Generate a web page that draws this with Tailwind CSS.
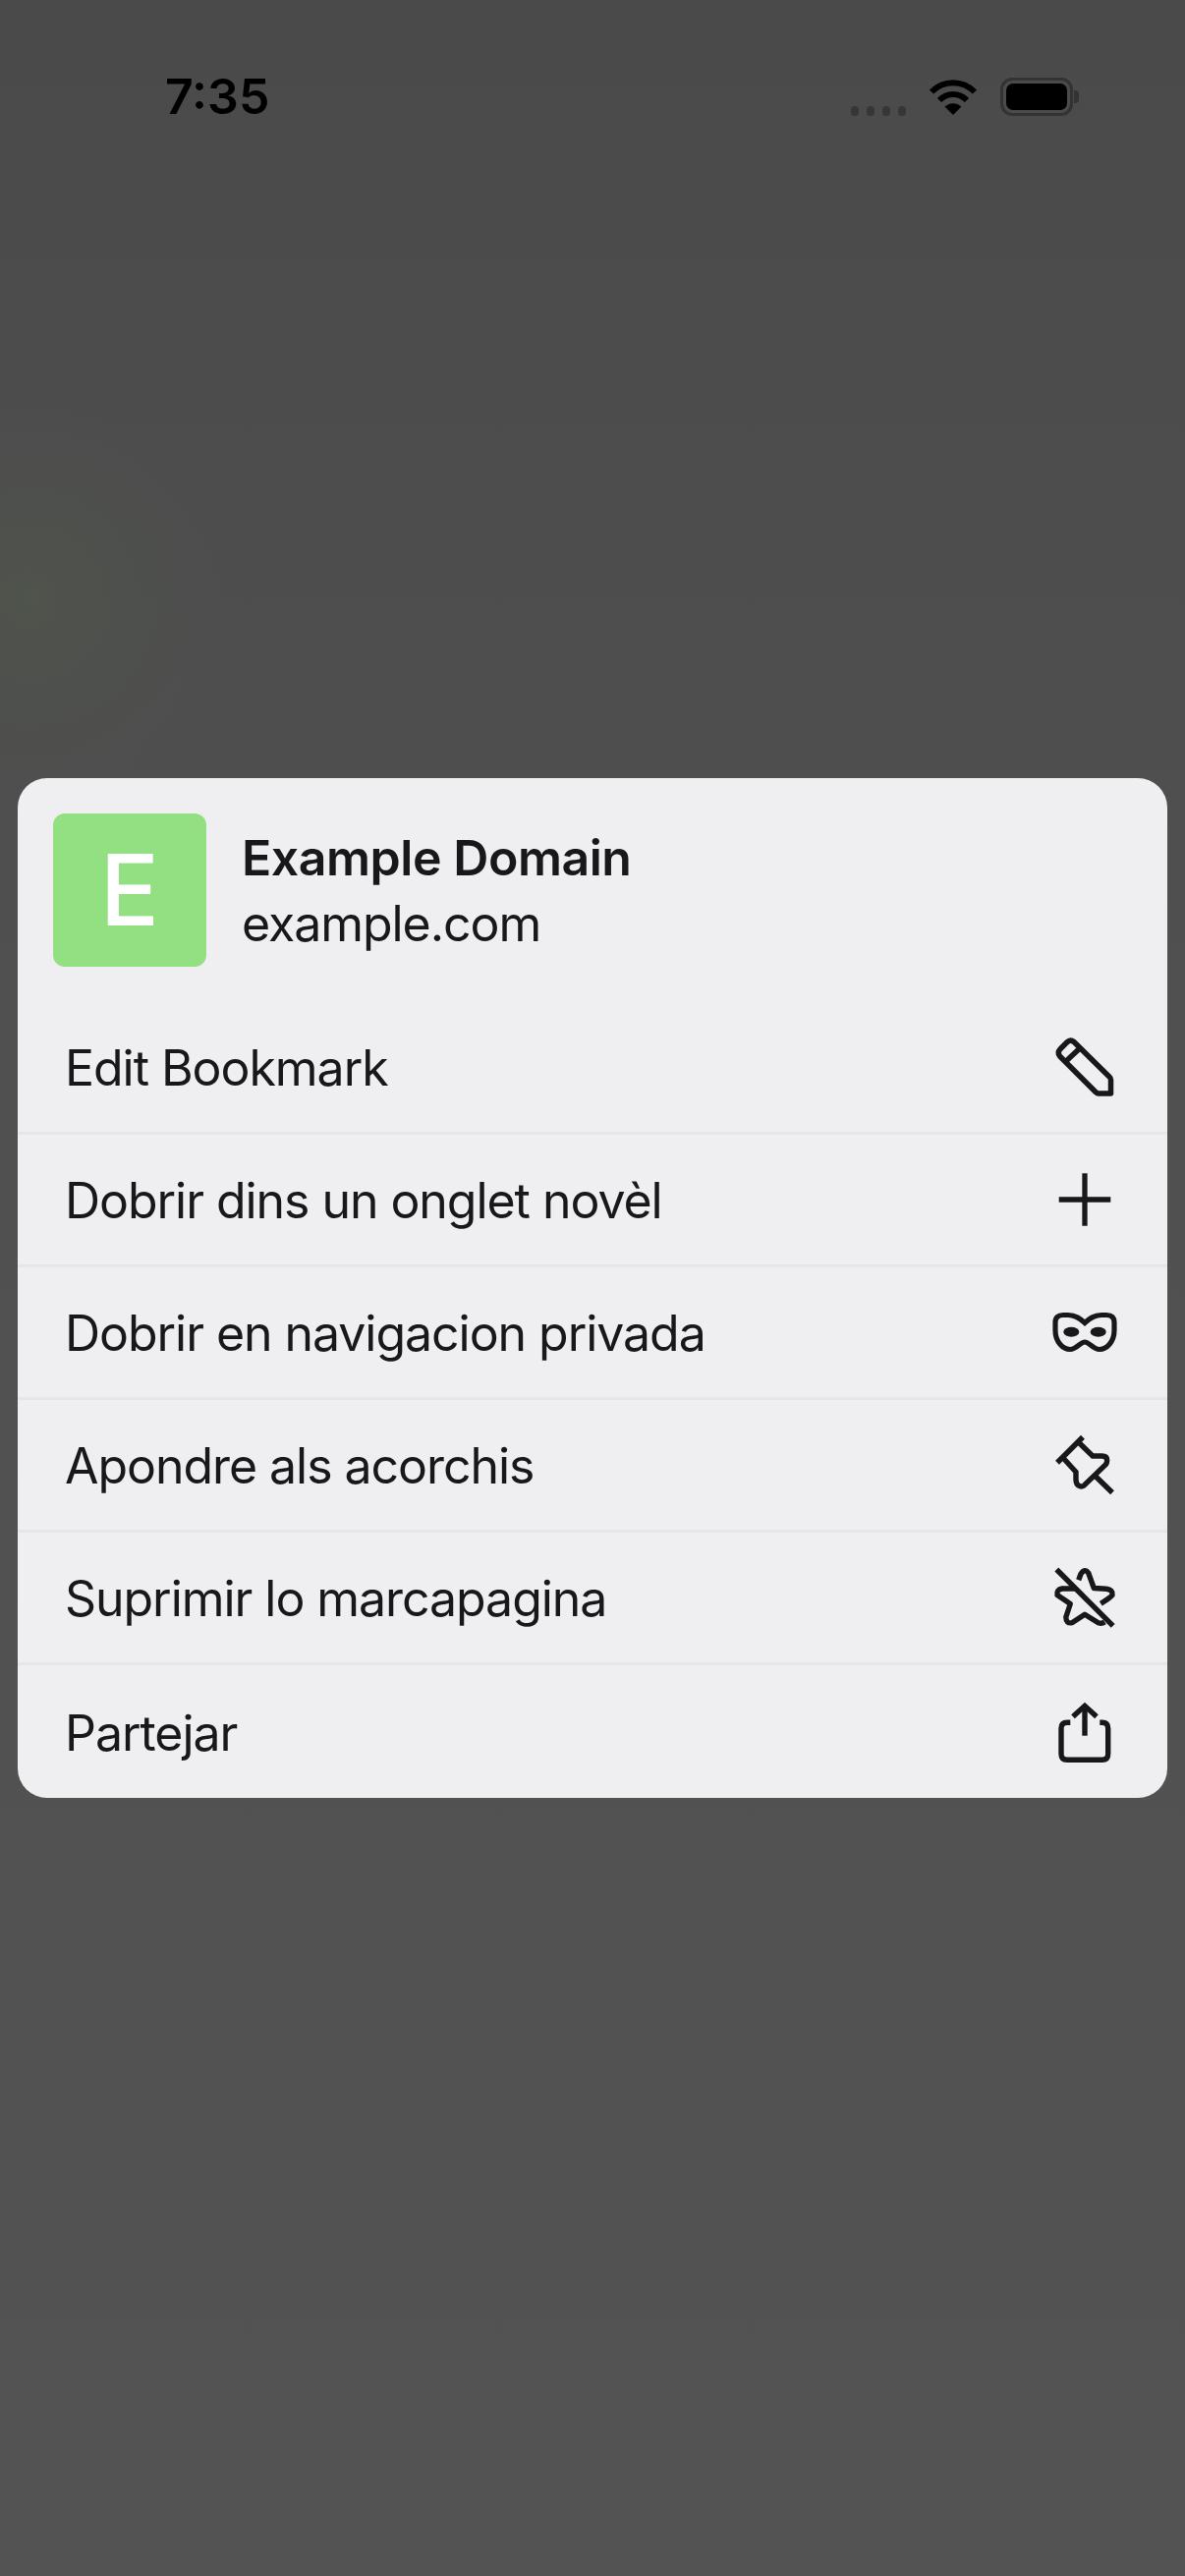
<!DOCTYPE html>
<html lang="oc">
<head>
<meta charset="utf-8">
<title>Example Domain</title>
<script src="https://cdn.jsdelivr.net/npm/@tailwindcss/browser@4"></script>
</head>
<body class="m-0">
<main class="relative w-[1206px] h-[2622px] overflow-hidden flex flex-col font-['Inter','Liberation_Sans',sans-serif] bg-[radial-gradient(circle_at_30px_610px,#4f544c_0,#4e514c_60px,transparent_200px),linear-gradient(180deg,#4a4a4a_0%,#505050_40%,#535353_100%)]">
  <header class="h-[792px] shrink-0">
    <div class="flex items-center h-[36px] mt-[80px] pl-[168px] pr-[114px]">
      <span class="text-[50px] leading-[36px] font-semibold text-black">7:35</span>
      <div class="ml-auto flex items-center">
        <div class="flex gap-[8px] items-end self-end mr-[23px]">
          <i class="block w-[8px] h-[10px] rounded-[4px] bg-[#363636]"></i>
          <i class="block w-[8px] h-[10px] rounded-[4px] bg-[#363636]"></i>
          <i class="block w-[8px] h-[10px] rounded-[4px] bg-[#363636]"></i>
          <i class="block w-[8px] h-[10px] rounded-[4px] bg-[#363636]"></i>
        </div>
        <svg class="block w-[50px] h-[37px] mr-[23px]" viewBox="0 0 50 37" fill="none" stroke="#000" stroke-width="6">
          <path d="M3 13.5C15.5 1 34.5 1 47 13.5"/>
          <path d="M11 22C19 14 31 14 39 22"/>
          <path d="M25 37L16.5 28.5C21.5 24 28.5 24 33.5 28.5Z" fill="#000" stroke="none"/>
        </svg>
        <div class="relative w-[74px] h-[39px] rounded-[12px] border-[3px] border-[#333] p-[3px]">
          <div class="w-full h-full rounded-[7px] bg-black"></div>
          <div class="absolute left-[72px] top-[10px] w-[5px] h-[13px] rounded-r-[4px] bg-[#333]"></div>
        </div>
      </div>
    </div>
  </header>

  <section class="mx-[18px] w-[1170px] h-[1038px] rounded-[30px] bg-[#efeff2] text-[#18181c] overflow-hidden flex flex-col text-[50px] tracking-[-1.05px]">
    <div class="flex gap-[36px] pl-[36px] pt-[36px] h-[228px] shrink-0">
      <div class="w-[156px] h-[156px] rounded-[12px] bg-[#92e082] flex items-center justify-center text-white text-[100px] leading-none font-medium tracking-normal">E</div>
      <div class="flex flex-col pt-[11px]">
        <span class="leading-[68px] font-semibold tracking-[-0.45px]">Example Domain</span>
        <span class="leading-[66px]">example.com</span>
      </div>
    </div>

    <div class="flex items-center justify-between h-[132px] pl-[48px] pr-[54px] shrink-0">
      <span class="pt-[3px]">Edit Bookmark</span>
      <svg class="block w-[60px] h-[60px] overflow-visible" viewBox="0 0 60 60" fill="none" stroke="#18181c" stroke-width="5.5" stroke-linejoin="round">
        <path d="M19 4.5Q15.3 1.5 12 4.8L4.8 12Q1.8 15.3 4.5 19L41 55.5Q42.5 57 44 57L56.5 57L56.5 43Q56.5 41.5 55 40Z"/>
        <path d="M24.7 11.3L11.3 23.7"/>
      </svg>
    </div>
    <div class="flex items-center justify-between h-[135px] border-t-[3px] border-[#e6e6ea] pl-[48px] pr-[54px] shrink-0">
      <span class="pt-[3px]">Dobrir dins un onglet novèl</span>
      <svg class="block w-[60px] h-[60px] overflow-visible" viewBox="0 0 60 60" fill="none" stroke="#18181c" stroke-width="5.3">
        <path d="M3.7 30H56.3M30 3.3V56.7"/>
      </svg>
    </div>
    <div class="flex items-center justify-between h-[135px] border-t-[3px] border-[#e6e6ea] pl-[48px] pr-[54px] shrink-0">
      <span class="pt-[3px]">Dobrir en navigacion privada</span>
      <svg class="block w-[60px] h-[60px] overflow-visible" viewBox="0 0 60 60" fill="none" stroke="#18181c" stroke-width="5.2">
        <path d="M30 20.5C34 17 39 12.5 47 12.5L52 12.5Q60 12.5 60 20L60 28C60 40 52 47.5 45 47.5C38 47.5 35 40 30 40C25 40 22 47.5 15 47.5C8 47.5 0 40 0 28L0 20Q0 12.5 8 12.5L13 12.5C21 12.5 26 17 30 20.5Z"/>
        <ellipse cx="16.3" cy="29.7" rx="8" ry="5" fill="#18181c" stroke="none"/>
        <ellipse cx="43.7" cy="29.7" rx="8" ry="5" fill="#18181c" stroke="none"/>
      </svg>
    </div>
    <div class="flex items-center justify-between h-[135px] border-t-[3px] border-[#e6e6ea] pl-[48px] pr-[54px] shrink-0">
      <span class="pt-[3px]">Apondre als acorchis</span>
      <svg class="block w-[60px] h-[60px] overflow-visible" viewBox="0 0 60 60" fill="none" stroke="#18181c" stroke-width="5.4">
        <path d="M28 1.7L2 27.7" stroke-width="5.5"/>
        <path d="M23.7 7L38 21L47.5 21Q52.7 21 52.7 25.3Q52.7 28 51.3 29.7L29.3 51Q27 52.5 25 51.7Q21 50.3 21 45.3L21 37.3L8.7 23.7"/>
        <path d="M40.3 41L58 58.3"/>
      </svg>
    </div>
    <div class="flex items-center justify-between h-[135px] border-t-[3px] border-[#e6e6ea] pl-[48px] pr-[54px] shrink-0">
      <span class="pt-[3px]">Suprimir lo marcapagina</span>
      <svg class="block w-[60px] h-[60px] overflow-visible" viewBox="0 0 60 60" fill="none" stroke="#18181c" stroke-width="5.4" stroke-linejoin="round">
        <path d="M1.3 1.5L58.7 58.8"/>
        <path d="M23.7 12.2L26 6Q30 0 33.7 5L39.3 20.5L52 21.2Q58.7 22 58 27.5Q57 29.5 46.3 36.2"/>
        <path d="M20.3 21L7 21Q1 22 2 27.5L15.3 36.5L10.8 50Q11 57 17 55.7L30 47.2L43.7 55.8Q47.5 57 50.3 55"/>
      </svg>
    </div>
    <div class="flex items-center justify-between flex-1 border-t-[3px] border-[#e6e6ea] pl-[48px] pr-[54px]">
      <span class="pt-[3px]">Partejar</span>
      <svg class="block w-[60px] h-[60px] overflow-visible" viewBox="0 0 60 60" fill="none" stroke="#18181c" stroke-width="5.4">
        <path d="M30 33.7V4"/>
        <path d="M18 14.3L30 3.3L42 14.3"/>
        <path d="M15.3 20.3L12 20.3Q6 20.3 6 26.3L6 52.3Q6 58.3 12 58.3L47.7 58.3Q53.7 58.3 53.7 52.3L53.7 26.3Q53.7 20.3 47.7 20.3L45.3 20.3"/>
      </svg>
    </div>
  </section>
</main>
</body>
</html>
